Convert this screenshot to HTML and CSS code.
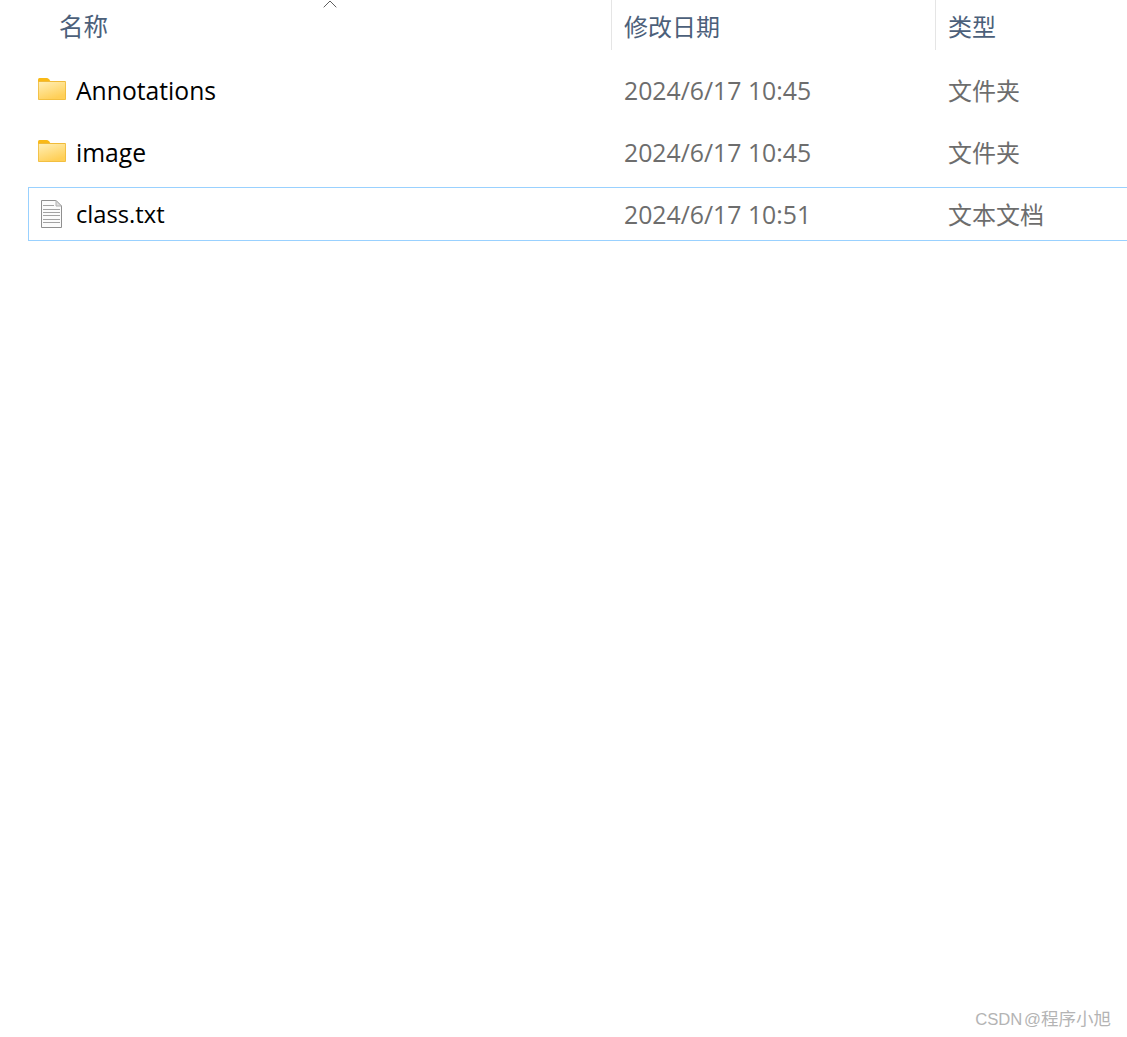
FILE: index.html
```html
<!DOCTYPE html>
<html lang="zh-CN">
<head>
<meta charset="utf-8">
<title>文件列表</title>
<link rel="stylesheet" href="styles.css">
</head>
<body>
<main class="explorer">
  <div class="header">
    <div class="head-cell head-name">名称
      <svg class="sort-caret" width="14" height="8" viewBox="0 0 14 8"><path d="M0.7 7.3 L7 1 L13.3 7.3" fill="none" stroke="#5f5f5f" stroke-width="1"/></svg>
    </div>
    <div class="head-cell head-date">修改日期</div>
    <div class="head-cell head-type">类型</div>
  </div>
  <div class="rows">
    <div class="row">
      <div class="cell-name">
        <svg class="icon folder-icon" width="28" height="22" viewBox="0 0 28 22"><use href="#folder"/></svg>
        <span class="filename">Annotations</span>
      </div>
      <div class="cell-date">2024/6/17 10:45</div>
      <div class="cell-type">文件夹</div>
    </div>
    <div class="row">
      <div class="cell-name">
        <svg class="icon folder-icon" width="28" height="22" viewBox="0 0 28 22"><use href="#folder"/></svg>
        <span class="filename">image</span>
      </div>
      <div class="cell-date">2024/6/17 10:45</div>
      <div class="cell-type">文件夹</div>
    </div>
    <div class="row selected">
      <div class="cell-name">
        <svg class="icon" width="28" height="30" viewBox="0 0 28 30">
          <path d="M3.5 1.5 H18 L23.5 7 V28.5 H3.5 Z" fill="#fbfbfb" stroke="#8f8f8f"/>
          <path d="M18 1.5 V7 H23.5 Z" fill="#dedede" stroke="#b0b0b0"/>
          <path d="M5 6.5 H16 M5 10.5 H22 M5 13.5 H22 M5 16.5 H22 M5 20.5 H22 M5 23.5 H22" stroke="#a2a2a2"/>
        </svg>
        <span class="filename filename-short">class.txt</span>
      </div>
      <div class="cell-date">2024/6/17 10:51</div>
      <div class="cell-type">文本文档</div>
    </div>
  </div>
  <div class="watermark">CSDN @<span class="watermark-cjk">程序小旭</span></div>
</main>
<svg class="defs" width="0" height="0">
  <defs>
    <linearGradient id="folderFill" x1="0" y1="0" x2="0.5" y2="1">
      <stop offset="0" stop-color="#ffefb5"/>
      <stop offset="1" stop-color="#ffcf57"/>
    </linearGradient>
    <symbol id="folder" viewBox="0 0 28 22">
      <path d="M0 1.5 Q0 0 1.5 0 H8.5 Q10 0 11 1.2 L13 4 H0 Z" fill="#f9b916"/>
      <rect x="0" y="3" width="28" height="19" rx="1" fill="#f0bb3a"/>
      <rect x="0.8" y="4" width="26.4" height="17.2" fill="url(#folderFill)"/>
    </symbol>
  </defs>
</svg>
</body>
</html>
```
FILE: styles.css
```css
html, body {
  margin: 0;
  padding: 0;
  background: #fff;
}
.explorer {
  position: relative;
  height: 1037px;
  overflow: hidden;
  font-family: "Open Sans", "Noto Sans CJK SC", sans-serif;
  font-size: 24px;
}
.defs {
  position: absolute;
}
.header {
  display: grid;
  grid-template-columns: 611px 324px 1fr;
  height: 50px;
  color: #4c607a;
  font-family: "Noto Sans CJK SC", sans-serif;
}
.head-cell {
  position: relative;
  display: flex;
  align-items: center;
  height: 50px;
}
.head-name {
  padding-left: 59px;
  font-size: 24.5px;
}
.head-date, .head-type {
  padding-left: 12px;
  border-left: 1px solid #e5e5e5;
}
.sort-caret {
  position: absolute;
  left: 323px;
  top: 0;
}
.rows {
  display: flex;
  flex-direction: column;
  gap: 8px;
  margin-top: 13px;
  margin-left: 28px;
}
.row {
  display: grid;
  grid-template-columns: 583px 324px 1fr;
  align-items: center;
  height: 54px;
  box-sizing: border-box;
}
.selected {
  border: 1px solid #99d1ff;
  border-right: 0;
}
.cell-name {
  display: flex;
  align-items: center;
  gap: 10px;
  padding-left: 10px;
  color: #000;
}
.selected .cell-name {
  padding-left: 9px;
}
.icon {
  flex: none;
}
.folder-icon {
  margin-bottom: 2px;
}
.filename {
  font-size: 24.7px;
}
.filename-short {
  font-size: 23.7px;
}
.cell-date, .cell-type {
  padding-left: 13px;
  color: #6d6d6d;
}
.cell-date {
  font-size: 24.8px;
}
.cell-type {
  padding-bottom: 2px;
  font-family: "Noto Sans CJK SC", sans-serif;
}
.selected .cell-date, .selected .cell-type {
  margin-left: -1px;
}
.watermark {
  position: absolute;
  right: 16px;
  top: 1007px;
  font-family: "Liberation Sans", "Noto Sans CJK SC", sans-serif;
  font-size: 16.7px;
  line-height: 24px;
  color: #b4b4b4;
  word-spacing: -3px;
}
.watermark-cjk {
  font-size: 17.5px;
}
```
